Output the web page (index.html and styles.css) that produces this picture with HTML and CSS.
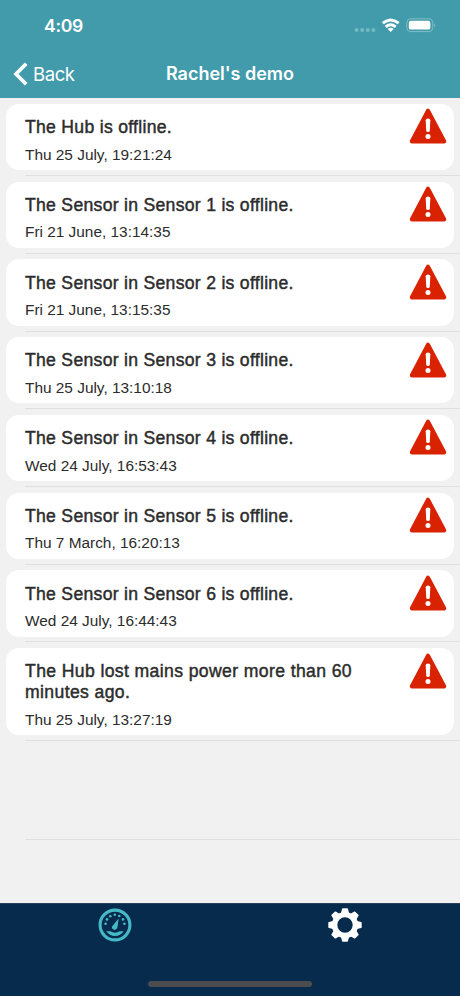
FILE: index.html
```html
<!DOCTYPE html>
<html lang="en">
<head>
<meta charset="utf-8">
<title>Rachel's demo</title>
<link rel="stylesheet" href="styles.css">
</head>
<body>
<svg class="defs" width="0" height="0" aria-hidden="true">
  <symbol id="warning" viewBox="0 0 38 36">
    <path d="M19 2.9L35 33.3H3Z" fill="#d92300" stroke="#d92300" stroke-width="4.4" stroke-linejoin="round"/>
    <path d="M16.7 12.3Q16.8 10.6 19 10.6T21.3 12.3L20.8 22.8Q20.6 24 19 24T17.2 22.8Z" fill="#fff"/>
    <circle cx="19" cy="28.4" r="2.5" fill="#fff"/>
  </symbol>
</svg>
<div class="screen">
  <header class="header">
    <div class="status">
      <span class="time">4:09</span>
      <svg class="indicators" width="82" height="18" viewBox="0 0 82 18">
        <g fill="#75b9c2"><circle cx="2.6" cy="13" r="2"/><circle cx="8.2" cy="13" r="2"/><circle cx="13.8" cy="13" r="2"/><circle cx="19.4" cy="13" r="2"/></g>
        <g fill="none" stroke="#fff" stroke-width="2.9"><path d="M28.7 6.2Q36.7 -.3 44.7 6.2"/><path d="M31.7 9.8Q36.7 5.7 41.7 9.8"/></g>
        <path d="M33.7 11.9Q36.7 9.6 39.7 11.9L36.7 15Z" fill="#fff"/>
        <rect x="52.8" y="1.8" width="26" height="12.8" rx="4" fill="none" stroke="#80bec7"/>
        <rect x="54.8" y="3.8" width="21.6" height="8.8" rx="2.2" fill="#fff"/>
        <path d="M80.3 6.2Q82.3 8.2 80.3 10.2Z" fill="#80bec7"/>
      </svg>
    </div>
    <nav class="nav">
      <a class="back"><svg width="16" height="24" viewBox="0 0 16 24"><path d="M13.2 1.8L3 12L13.2 22.2" fill="none" stroke="#fff" stroke-width="3.7"/></svg><span class="back-label">Back</span></a>
      <h1 class="heading">Rachel's demo</h1>
    </nav>
  </header>
  <main class="list">
    <div class="row"><article class="card"><div class="text"><h2 class="title">The Hub is offline.</h2><p class="date">Thu 25 July, 19:21:24</p></div><svg class="alert"><use href="#warning"/></svg></article></div>
    <div class="row"><article class="card"><div class="text"><h2 class="title">The Sensor in Sensor 1 is offline.</h2><p class="date">Fri 21 June, 13:14:35</p></div><svg class="alert"><use href="#warning"/></svg></article></div>
    <div class="row"><article class="card"><div class="text"><h2 class="title">The Sensor in Sensor 2 is offline.</h2><p class="date">Fri 21 June, 13:15:35</p></div><svg class="alert"><use href="#warning"/></svg></article></div>
    <div class="row"><article class="card"><div class="text"><h2 class="title">The Sensor in Sensor 3 is offline.</h2><p class="date">Thu 25 July, 13:10:18</p></div><svg class="alert"><use href="#warning"/></svg></article></div>
    <div class="row"><article class="card"><div class="text"><h2 class="title">The Sensor in Sensor 4 is offline.</h2><p class="date">Wed 24 July, 16:53:43</p></div><svg class="alert"><use href="#warning"/></svg></article></div>
    <div class="row"><article class="card"><div class="text"><h2 class="title">The Sensor in Sensor 5 is offline.</h2><p class="date">Thu 7 March, 16:20:13</p></div><svg class="alert"><use href="#warning"/></svg></article></div>
    <div class="row"><article class="card"><div class="text"><h2 class="title">The Sensor in Sensor 6 is offline.</h2><p class="date">Wed 24 July, 16:44:43</p></div><svg class="alert"><use href="#warning"/></svg></article></div>
    <div class="row"><article class="card"><div class="text"><h2 class="title title-long">The Hub lost mains power more than 60<br>minutes ago.</h2><p class="date">Thu 25 July, 13:27:19</p></div><svg class="alert"><use href="#warning"/></svg></article></div>
    <div class="row empty"></div>
  </main>
  <footer class="tabs">
    <div class="tab-row">
      <a class="tab"><svg width="34" height="34" viewBox="0 0 34 34">
        <circle cx="17" cy="17" r="14.9" fill="none" stroke="#46b9c9" stroke-width="3.1"/>
        <g fill="#46b9c9"><circle cx="7.6" cy="15.7" r="1.3"/><circle cx="9" cy="11.4" r="1.3"/><circle cx="12.3" cy="8.2" r="1.3"/><circle cx="16.8" cy="6.8" r="1.3"/><circle cx="21.3" cy="8" r="1.3"/><circle cx="25" cy="11.4" r="1.3"/><circle cx="26.4" cy="15.7" r="1.3"/>
        <path d="M20.6 10.6L19.5 19.2Q18.8 22 16.5 22T13.9 19.3Q14.1 18 15.3 17Z"/>
        <path d="M8.2 23.3H12.3Q17 26 21.7 23.3H25.8Q22.5 28 17 28T8.2 23.3Z"/></g>
      </svg></a>
      <a class="tab"><svg width="34" height="34" viewBox="-17 -17 34 34">
        <defs><path id="tooth" d="M-4.3 -11L-3 -16.1Q-2.8 -16.7 -2.2 -16.7H2.2Q2.8 -16.7 3 -16.1L4.3 -11Z"/></defs>
        <g fill="#fff"><use href="#tooth"/><use href="#tooth" transform="rotate(45)"/><use href="#tooth" transform="rotate(90)"/><use href="#tooth" transform="rotate(135)"/><use href="#tooth" transform="rotate(180)"/><use href="#tooth" transform="rotate(225)"/><use href="#tooth" transform="rotate(270)"/><use href="#tooth" transform="rotate(315)"/></g>
        <circle r="10.4" fill="none" stroke="#fff" stroke-width="5.4"/>
      </svg></a>
    </div>
    <div class="home-bar"></div>
  </footer>
</div>
</body>
</html>
```
FILE: styles.css
```css
* { box-sizing: border-box; }
body { margin: 0; font-family: "Liberation Sans", Arial, sans-serif; }
h1, h2, p { margin: 0; font-weight: 400; }
svg { display: block; flex: none; }
.defs { display: none; }
.screen { width: 460px; height: 996px; display: flex; flex-direction: column; background: #f1f1f1; overflow: hidden; }
.header { flex: none; height: 98px; background: #419bab; color: #fff; font-family: Inter, sans-serif; }
.status { height: 50px; padding: 17px 24px 0 44px; display: flex; justify-content: space-between; }
.time { font-size: 17.6px; line-height: 18px; font-weight: 600; letter-spacing: -.3px; }
.nav { height: 48px; display: grid; grid-template-columns: 110px 1fr 110px; align-items: center; }
.back { display: flex; align-items: center; gap: 4px; padding-left: 13px; }
.back-label { font-size: 18.5px; line-height: 24px; letter-spacing: -.4px; }
.heading { font-size: 18px; line-height: 24px; font-weight: 600; text-align: center; white-space: nowrap; letter-spacing: 0; }
.list { flex: 1; padding-top: .3px; color: #2c2c2c; }
.row { padding: 5.7px 6px 5.8px; background: linear-gradient(#dfdfdf, #dfdfdf) right bottom / calc(100% - 25px) 1px no-repeat; }
.card { min-height: 66.25px; display: flex; justify-content: space-between; padding: 13.2px 7px 5.5px 19px; background: #fff; border-radius: 13px; }
.title { font-size: 17.6px; line-height: 21px; -webkit-text-stroke: .45px #2c2c2c; white-space: nowrap; letter-spacing: .29px; }
.title-long { letter-spacing: .38px; }
.date { margin-top: 6.5px; font-size: 15.4px; line-height: 20px; white-space: nowrap; }
.alert { width: 38px; height: 36px; margin-top: -8.7px; }
.empty { height: 98.9px; }
.tabs { flex: none; height: 93px; background: #062b4c; border-top: 1px solid #28425a; display: flex; flex-direction: column; justify-content: space-between; align-items: center; padding: 3.5px 0 9px; }
.tab-row { width: 100%; display: grid; grid-template-columns: 1fr 1fr; }
.tab { display: flex; justify-content: center; }
.home-bar { width: 164px; height: 6px; border-radius: 3px; background: #4c4c4e; }
```
